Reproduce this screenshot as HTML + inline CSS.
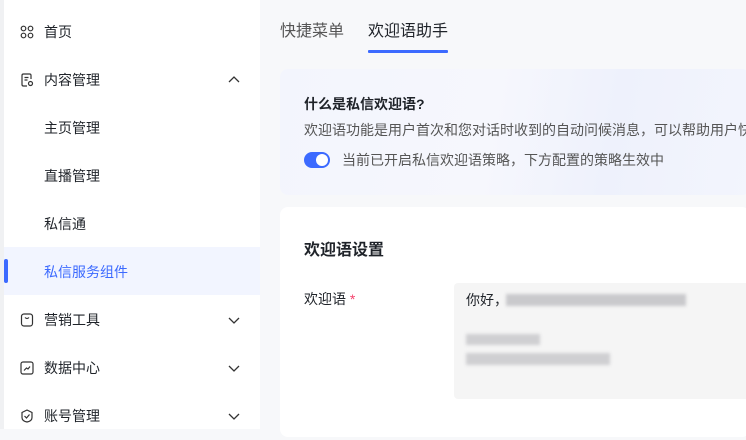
<!DOCTYPE html>
<html><head><meta charset="utf-8"><style>
*{margin:0;padding:0;box-sizing:border-box}
body{width:746px;height:429px;overflow:hidden;background:#f7f8fa;font-family:"Liberation Sans","Noto Sans CJK SC",sans-serif;position:relative;color:#1f2329}
.side{position:absolute;left:0;top:0;width:260px;height:429px;background:#fff;border-left:4px solid #f0f1f3}
.it{position:absolute;left:0;width:256px;height:48px;font-size:14px;line-height:48px;color:#1f2329}
.it .t{position:absolute;left:40px;top:1px}
.it svg.ic{position:absolute;left:16px;top:18px}
.it .ar{position:absolute;left:224px;top:20px}
.sel{background:#f2f5ff;color:#3c6aff}
.sel:before{content:"";position:absolute;left:0;top:12px;width:4px;height:24px;background:#3c6aff;border-radius:2px}
.tab{position:absolute;top:21px;font-size:16px;line-height:22px}
.banner{position:absolute;left:280px;top:69px;width:470px;height:126px;border-radius:8px;background:linear-gradient(100deg,#f3f5fd 0%,#f6f7fd 45%,#eef1fc 70%,#f3f5fd 100%)}
.card{position:absolute;left:280px;top:207px;width:470px;height:230px;background:#fff;border-radius:8px}
.blur{position:absolute;height:12px;background:#cfcfd2;filter:blur(1.5px)}
</style></head><body>
<div class="side">
 <div class="it" style="top:7px"><svg class="ic" width="14" height="14" viewBox="0 0 14 14" fill="none" stroke="#333" stroke-width="1.2"><circle cx="3.5" cy="3.5" r="2.3"/><circle cx="10.5" cy="3.5" r="2.3"/><circle cx="3.5" cy="10.5" r="2.3"/><circle cx="10.5" cy="10.5" r="2.3"/></svg><span class="t">首页</span></div>
 <div class="it" style="top:55px"><svg class="ic" width="14" height="14" viewBox="0 0 14 14" fill="none" stroke="#333" stroke-width="1.2"><path d="M11 6V2.5Q11 1 9.5 1h-6Q2 1 2 2.5v9Q2 13 3.5 13H7"/><path d="M4.5 4.5h4M4.5 7h3"/><circle cx="10.5" cy="10.5" r="2"/></svg><span class="t">内容管理</span><svg class="ar" width="12" height="10" viewBox="0 0 12 10" fill="none" stroke="#333" stroke-width="1.3"><path d="M1 7l5-5 5 5"/></svg></div>
 <div class="it" style="top:103px"><span class="t">主页管理</span></div>
 <div class="it" style="top:151px"><span class="t">直播管理</span></div>
 <div class="it" style="top:199px"><span class="t">私信通</span></div>
 <div class="it sel" style="top:247px"><span class="t">私信服务组件</span></div>
 <div class="it" style="top:295px"><svg class="ic" width="14" height="14" viewBox="0 0 14 14" fill="none" stroke="#333" stroke-width="1.2"><rect x="1.5" y="1" width="11" height="12" rx="2.5"/><path d="M5 4.5q2 2 4 0"/></svg><span class="t">营销工具</span><svg class="ar" width="12" height="10" viewBox="0 0 12 10" fill="none" stroke="#333" stroke-width="1.3"><path d="M1 3l5 5 5-5"/></svg></div>
 <div class="it" style="top:343px"><svg class="ic" width="14" height="14" viewBox="0 0 14 14" fill="none" stroke="#333" stroke-width="1.2"><rect x="1" y="1" width="12" height="12" rx="2"/><path d="M4 9.5l2.5-2.5 1.5 1 2-2.5"/></svg><span class="t">数据中心</span><svg class="ar" width="12" height="10" viewBox="0 0 12 10" fill="none" stroke="#333" stroke-width="1.3"><path d="M1 3l5 5 5-5"/></svg></div>
 <div class="it" style="top:391px"><svg class="ic" width="14" height="14" viewBox="0 0 14 14" fill="none" stroke="#333" stroke-width="1.2"><path d="M7 1l5 2.5v5Q12 12 7 13 2 12 2 8.5v-5z"/><path d="M4.5 7l2 2 3-3.5"/></svg><span class="t">账号管理</span><svg class="ar" width="12" height="10" viewBox="0 0 12 10" fill="none" stroke="#333" stroke-width="1.3"><path d="M1 3l5 5 5-5"/></svg></div>
</div>
<div class="tab" style="left:280px;color:#555">快捷菜单</div>
<div class="tab" style="left:368px;color:#1f2329">欢迎语助手</div>
<div style="position:absolute;left:368px;top:50px;width:80px;height:3px;background:#3c6aff;border-radius:1px"></div>
<div class="banner">
 <div style="position:absolute;left:24px;top:25px;font-size:14px;font-weight:bold;line-height:20px">什么是私信欢迎语?</div>
 <div style="position:absolute;left:24px;top:51px;font-size:14px;color:#555;line-height:20px;white-space:nowrap">欢迎语功能是用户首次和您对话时收到的自动问候消息，可以帮助用户快</div>
 <div style="position:absolute;left:24px;top:83px;width:26px;height:16px;border-radius:8px;background:#3c6aff"><div style="position:absolute;right:2px;top:2px;width:12px;height:12px;border-radius:50%;background:#fff"></div></div>
 <div style="position:absolute;left:62px;top:81px;font-size:14px;color:#555;line-height:20px;white-space:nowrap">当前已开启私信欢迎语策略，下方配置的策略生效中</div>
</div>
<div class="card">
 <div style="position:absolute;left:24px;top:33px;font-size:16px;font-weight:bold;line-height:22px">欢迎语设置</div>
 <div style="position:absolute;left:24px;top:82px;font-size:14px;line-height:20px">欢迎语 <span style="color:#f5426c">*</span></div>
 <div style="position:absolute;left:174px;top:76px;width:300px;height:116px;background:#f5f5f5;border-radius:4px">
  <div style="position:absolute;left:12px;top:7px;font-size:14px;line-height:20px">你好，</div>
  <div class="blur" style="left:52px;top:11px;width:180px;background:#c9c9cc"></div>
  <div class="blur" style="left:12px;top:51px;width:74px;height:11px"></div>
  <div class="blur" style="left:12px;top:70px;width:144px;height:12px"></div>
 </div>
</div>
</body></html>
